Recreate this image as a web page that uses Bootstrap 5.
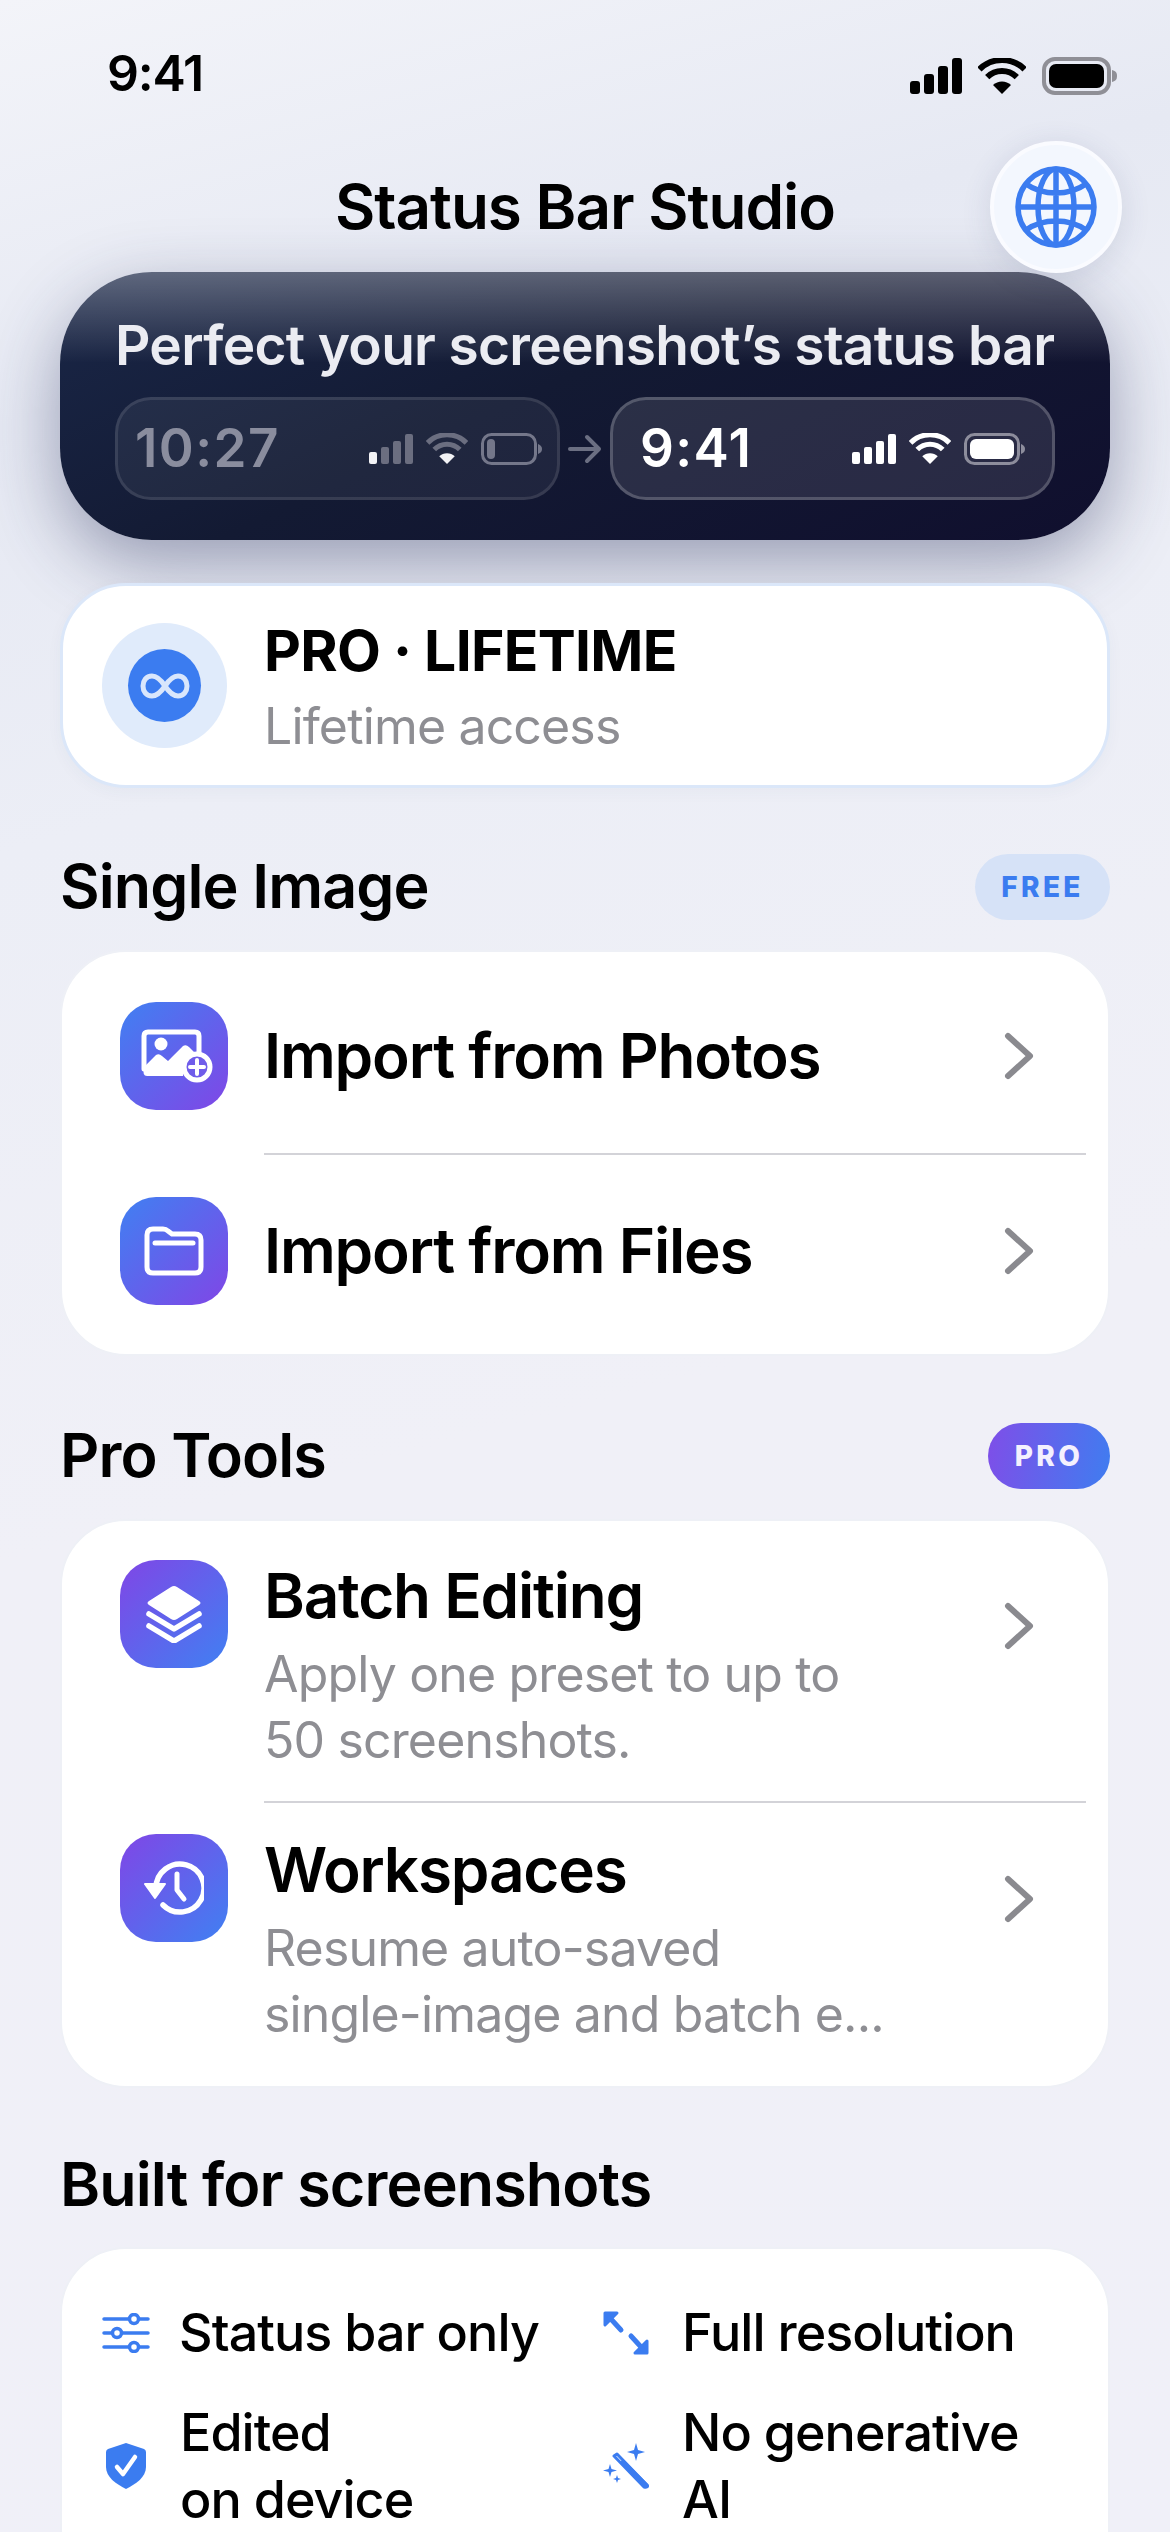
<!DOCTYPE html>
<html lang="en">
<head>
    <meta charset="UTF-8">
    <meta name="viewport" content="width=device-width, initial-scale=1.0">
    <title>Status Bar Studio</title>
    <link href="https://cdn.jsdelivr.net/npm/bootstrap@5.3.0/dist/css/bootstrap.min.css" rel="stylesheet">
    <style>
        html, body { height: 2532px; overflow: hidden; }
        body {
            font-family: Inter, "Liberation Sans", sans-serif;
            color: #000;
            background: linear-gradient(165deg, #f3f4f9 0, #e6e9f3 15%, #eceef6 30%, #f0f0f7 55%, #f0f0f8 100%);
        }
        .status-row { height: 141px; padding: 47px 52px 0 107px; }
        .status-time { font-size: 50px; font-weight: 600; line-height: 52px; letter-spacing: -1.200px; }
        .status-icons { gap: 16px; margin-top: 10px; }
        .app-head { height: 131px; padding-top: 33px; }
        .app-title { font-size: 62px; font-weight: 600; line-height: 66px; letter-spacing: -1px; margin: 0; }
        .globe-btn {
            position: absolute; right: 48px; top: 0; width: 132px; height: 132px;
            background: #f3f7fe; border: 4px solid #fafbff; border-radius: 50%;
            box-shadow: 0 6px 30px rgba(60, 70, 110, .14);
            z-index: 2;
        }
        .page-body { padding: 0 60px; }
        .hero-box {
            height: 268px; padding: 42px 55px 0;
            border-radius: 92px;
            background: linear-gradient(180deg, rgba(255, 255, 255, .3) 0, rgba(255, 255, 255, 0) 34%), linear-gradient(155deg, #1a2748 0, #131a33 45%, #100f2e 100%);
            box-shadow: 0 24px 70px rgba(40, 48, 90, .42);
        }
        .hero-text { font-size: 55px; font-weight: 600; line-height: 62px; letter-spacing: -.7px; color: #ebecf2; white-space: nowrap; margin: 0 0 21px; }
        .bar-pill {
            width: 445px; height: 103px; padding: 0 14px 0 17px; border-radius: 36px;
            border: 3px solid rgba(255, 255, 255, .1); background: rgba(255, 255, 255, .06);
            font-size: 53px; font-weight: 600; letter-spacing: 1.400px; color: #8a8d9e;
        }
        .bar-pill.after-pill { padding-left: 27px; padding-right: 26px; border-color: rgba(255, 255, 255, .2); background: rgba(255, 255, 255, .1); color: #fff; }
        .pill-icons { margin-left: auto; gap: 13px; }
        .plan-box {
            height: 205px; margin-top: 43px; padding: 0 39px; border-radius: 66px;
            background: #fff; border: 3px solid #dbe7f9; box-shadow: 0 4px 16px rgba(60, 70, 110, .04);
        }
        .plan-ring { width: 125px; height: 125px; border-radius: 50%; background: #e0ebfb; flex: none; margin-right: 37px; }
        .plan-dot { width: 73px; height: 73px; border-radius: 50%; background: #3b7cf0; }
        .plan-info { padding-top: 6px; }
        .plan-name { font-size: 57px; font-weight: 700; line-height: 66px; letter-spacing: -.7px; margin-bottom: 9px; }
        .sub-text { font-size: 50px; line-height: 66px; color: #8e8e93; letter-spacing: -.85px; }
        .sec-head { height: 67px; margin-bottom: 30px; }
        .sec-single { margin-top: 65px; }
        .sec-pro { margin-top: 66px; }
        .sec-built { margin-top: 63px; margin-bottom: 0; }
        .sec-title { font-size: 61px; font-weight: 600; line-height: 67px; letter-spacing: -.9px; margin: 0; }
        .tag-free, .tag-pro { font-size: 28px; font-weight: 800; letter-spacing: 3.400px; height: 66px; border-radius: 33px; }
        .tag-free { width: 135px; color: #3b7cf0; background: #d6e2f7; }
        .tag-pro { width: 122px; color: #f4f1fe; background: linear-gradient(100deg, #7f4ee8, #3f7df0); }
        .white-box { background: #fff; border: 2px solid #eef0f6; border-radius: 66px; overflow: hidden; }
        .white-box .list-group-item { background: transparent; border: 0; padding: 0; color: #000; }
        .row-in { position: relative; padding-left: 58px; padding-right: 74px; }
        .list-group-item + .list-group-item .row-in::before {
            content: ""; position: absolute; left: 202px; right: 22px; top: 0; height: 2px; background: #d3d3d8;
        }
        .tile { width: 108px; height: 108px; border-radius: 36px; flex: none; margin-right: 36px; }
        .tile-a { background: linear-gradient(135deg, #4080f2, #8046e6); }
        .tile-b { background: linear-gradient(135deg, #8046e6, #4080f2); }
        .photo-glyph { margin-left: 6px; }
        .row-title { font-size: 62px; font-weight: 600; line-height: 70px; letter-spacing: -1.200px; }
        .chev { margin-left: auto; flex: none; }
        .row-top { height: 201px; padding-top: 6px; }
        .row-bottom { height: 201px; padding-bottom: 6px; }
        .row-batch { height: 280px; padding-top: 39px; }
        .row-batch .row-text { margin-top: 1px; }
        .row-batch .chev { margin-top: 42px; }
        .row-work { height: 285px; padding-top: 33px; }
        .row-work .row-text { margin-top: 1px; }
        .row-work .chev { margin-top: 41px; }
        .row-text .row-title { margin-bottom: 10px; }
        .feat-box { margin-top: 29px; height: 400px; padding: 50px 10px 0 40px; }
        .feat-grid { display: grid; grid-template-columns: 498px 498px; row-gap: 33px; }
        .feat-icon { width: 50px; flex: none; margin-right: 28px; }
        .feat-slide { margin-right: 27px; }
        .feat-shield { padding-left: 4px; }
        .feat-wide { margin-left: 3px; margin-right: 29px; }
        .feat-text { font-size: 52px; font-weight: 500; line-height: 67px; letter-spacing: -.95px; }
    </style>
</head>
<body>
    <svg width="0" height="0" class="position-absolute">
        <symbol id="wifi-arcs" viewBox="0 0 48 36">
            <path d="M1.4 11.4A32 32 0 0 1 46.600 11.4M9.200 19.200A21 21 0 0 1 38.800 19.200" fill="none" stroke="currentColor" stroke-width="6"/>
        </symbol>
        <symbol id="wifi-dot" viewBox="0 0 48 36">
            <path d="M24 36L15 27A13 13 0 0 1 33 27Z" fill="currentColor"/>
        </symbol>
        <symbol id="chev-icon" viewBox="0 0 30 48">
            <path d="M4 4L26 24L4 44" fill="none" stroke="#8a8a8f" stroke-width="6" stroke-linecap="round" stroke-linejoin="round"/>
        </symbol>
    </svg>

    <div class="status-row d-flex justify-content-between align-items-start">
        <div class="status-time">9:41</div>
        <div class="status-icons d-flex align-items-center">
            <svg width="52" height="36" viewBox="0 0 52 36" fill="#000"><rect x="0" y="23" width="10" height="13" rx="3"/><rect x="14" y="16" width="10" height="20" rx="3"/><rect x="28" y="8" width="10" height="28" rx="3"/><rect x="42" y="0" width="10" height="36" rx="3"/></svg>
            <svg width="48" height="36" color="#000"><use href="#wifi-arcs"/><use href="#wifi-dot"/></svg>
            <svg width="76" height="38" viewBox="0 0 76 38"><rect x="2" y="2" width="65" height="34" rx="11" fill="none" stroke="#8f8f96" stroke-width="4"/><rect x="7" y="7" width="55" height="24" rx="7" fill="#000"/><path d="M70 13C74 14 75 16 75 19S74 24 70 25Z" fill="#8f8f96"/></svg>
        </div>
    </div>

    <div class="app-head position-relative text-center">
        <h1 class="app-title">Status Bar Studio</h1>
        <div class="globe-btn d-flex align-items-center justify-content-center">
            <svg width="82" height="82" viewBox="0 0 82 82" fill="none" stroke="#3b7cf0" stroke-width="5.500">
                <circle cx="41" cy="41" r="38"/><ellipse cx="41" cy="41" rx="18" ry="38"/><path d="M41 3V79M3 41H79M11 18C28 30 54 30 71 18M11 64C28 52 54 52 71 64"/>
            </svg>
        </div>
    </div>

    <div class="page-body">
        <div class="hero-box">
            <p class="hero-text">Perfect your screenshot’s status bar</p>
            <div class="d-flex align-items-center justify-content-between">
                <div class="bar-pill d-flex align-items-center">
                    <span>10:27</span>
                    <div class="pill-icons d-flex align-items-center">
                        <svg width="44" height="30" viewBox="0 0 44 30"><rect x="0" y="18" width="8" height="12" rx="2" fill="#f2f2f5"/><g fill="#6b6e80"><rect x="12" y="13" width="8" height="17" rx="2"/><rect x="24" y="7" width="8" height="23" rx="2"/><rect x="36" y="0" width="8" height="30" rx="2"/></g></svg>
                        <svg width="42" height="31" color="#6b6e80"><use href="#wifi-arcs"/><use href="#wifi-dot" color="#f2f2f5"/></svg>
                        <svg width="62" height="32" viewBox="0 0 62 32"><rect x="1.500" y="1.500" width="53" height="29" rx="9" fill="none" stroke="#74778a" stroke-width="3"/><rect x="6" y="6" width="8" height="20" rx="4" fill="#74778a"/><path d="M57 11C60 12 61 14 61 16S60 20 57 21Z" fill="#74778a"/></svg>
                    </div>
                </div>
                <svg width="34" height="30" viewBox="0 0 34 30" fill="none" stroke="#6b6f82" stroke-width="4" stroke-linecap="round" stroke-linejoin="round"><path d="M2 15H31M19 3L31 15L19 27"/></svg>
                <div class="bar-pill after-pill d-flex align-items-center">
                    <span>9:41</span>
                    <div class="pill-icons d-flex align-items-center">
                        <svg width="44" height="30" viewBox="0 0 44 30" fill="#fff"><rect x="0" y="18" width="8" height="12" rx="2"/><rect x="12" y="13" width="8" height="17" rx="2"/><rect x="24" y="7" width="8" height="23" rx="2"/><rect x="36" y="0" width="8" height="30" rx="2"/></svg>
                        <svg width="42" height="31" color="#fff"><use href="#wifi-arcs"/><use href="#wifi-dot"/></svg>
                        <svg width="62" height="32" viewBox="0 0 62 32"><rect x="1.500" y="1.500" width="53" height="29" rx="9" fill="none" stroke="#8d8d9c" stroke-width="3"/><rect x="6" y="6" width="44" height="20" rx="6" fill="#fff"/><path d="M57 11C60 12 61 14 61 16S60 20 57 21Z" fill="#8d8d9c"/></svg>
                    </div>
                </div>
            </div>
        </div>

        <div class="plan-box d-flex align-items-center">
            <div class="plan-ring d-flex align-items-center justify-content-center">
                <div class="plan-dot d-flex align-items-center justify-content-center">
                    <svg width="50" height="26" viewBox="0 0 50 26" fill="none" stroke="#d9e6fc" stroke-width="5"><path d="M25 13C21 7 17 3 12 3C6 3 3 8 3 13S6 23 12 23C17 23 21 19 25 13C29 7 33 3 38 3C44 3 47 8 47 13S44 23 38 23C33 23 29 19 25 13Z"/></svg>
                </div>
            </div>
            <div class="plan-info">
                <div class="plan-name">PRO · LIFETIME</div>
                <div class="sub-text">Lifetime access</div>
            </div>
        </div>

        <div class="sec-head sec-single d-flex align-items-center justify-content-between">
            <h2 class="sec-title">Single Image</h2>
            <span class="tag-free d-flex align-items-center justify-content-center">FREE</span>
        </div>
        <div class="white-box card">
            <div class="list-group list-group-flush">
                <div class="list-group-item">
                    <div class="row-in row-top d-flex align-items-center">
                        <div class="tile tile-a d-flex align-items-center justify-content-center">
                            <svg class="photo-glyph" width="72" height="54" viewBox="0 0 72 54">
                                <path d="M3 40V7Q3 3 7 3H54Q58 3 58 7V30" fill="none" stroke="#fff" stroke-width="5" stroke-linecap="round"/>
                                <path d="M3 38L15 26Q18 24 21 27L27 32L42 17Q45 15 48 18L56 26Q44 30 42 47H6Q1 47 3 38Z" fill="#fff"/>
                                <circle cx="20" cy="15" r="6.500" fill="#fff"/>
                                <circle cx="56" cy="38" r="13" fill="#6f5cea" stroke="#fff" stroke-width="5"/>
                                <path d="M56 31V45M49 38H63" stroke="#fff" stroke-width="4" stroke-linecap="round"/>
                            </svg>
                        </div>
                        <div class="row-title">Import from Photos</div>
                        <svg class="chev" width="30" height="48"><use href="#chev-icon"/></svg>
                    </div>
                </div>
                <div class="list-group-item">
                    <div class="row-in row-bottom d-flex align-items-center">
                        <div class="tile tile-a d-flex align-items-center justify-content-center">
                            <svg width="60" height="50" viewBox="0 0 60 50" fill="none" stroke="#fff" stroke-width="5" stroke-linejoin="round"><path d="M3 9Q3 3 9 3H19Q22 3 24 5L28 8H51Q57 8 57 14V41Q57 47 51 47H9Q3 47 3 41Z"/><path d="M11 17H49" stroke-linecap="round"/></svg>
                        </div>
                        <div class="row-title">Import from Files</div>
                        <svg class="chev" width="30" height="48"><use href="#chev-icon"/></svg>
                    </div>
                </div>
            </div>
        </div>

        <div class="sec-head sec-pro d-flex align-items-center justify-content-between">
            <h2 class="sec-title">Pro Tools</h2>
            <span class="tag-pro d-flex align-items-center justify-content-center">PRO</span>
        </div>
        <div class="white-box card">
            <div class="list-group list-group-flush">
                <div class="list-group-item">
                    <div class="row-in row-batch d-flex align-items-start">
                        <div class="tile tile-b d-flex align-items-center justify-content-center">
                            <svg width="56" height="58" viewBox="0 0 56 58"><path d="M25 2Q28 0 31 2L53 16Q56 18 53 20L31 34Q28 36 25 34L3 20Q0 18 3 16Z" fill="#fff"/><path d="M3 29L28 44L53 29M3 41L28 56L53 41" fill="none" stroke="#fff" stroke-width="5.500" stroke-linecap="round" stroke-linejoin="round"/></svg>
                        </div>
                        <div class="row-text">
                            <div class="row-title">Batch Editing</div>
                            <div class="sub-text">Apply one preset to up to<br>50 screenshots.</div>
                        </div>
                        <svg class="chev" width="30" height="48"><use href="#chev-icon"/></svg>
                    </div>
                </div>
                <div class="list-group-item">
                    <div class="row-in row-work d-flex align-items-start">
                        <div class="tile tile-b d-flex align-items-center justify-content-center">
                            <svg width="60" height="54" viewBox="0 0 60 54"><path d="M12 27A24 24 0 1 1 19 44" fill="none" stroke="#fff" stroke-width="5.500" stroke-linecap="round"/><path d="M1 23L21 23L11 37Z" fill="#fff" stroke="#fff" stroke-width="2" stroke-linejoin="round"/><path d="M33 13V29L40 38" fill="none" stroke="#fff" stroke-width="5" stroke-linecap="round" stroke-linejoin="round"/></svg>
                        </div>
                        <div class="row-text">
                            <div class="row-title">Workspaces</div>
                            <div class="sub-text">Resume auto-saved<br>single-image and batch e...</div>
                        </div>
                        <svg class="chev" width="30" height="48"><use href="#chev-icon"/></svg>
                    </div>
                </div>
            </div>
        </div>

        <div class="sec-head sec-built d-flex align-items-center">
            <h2 class="sec-title">Built for screenshots</h2>
        </div>
        <div class="white-box card feat-box">
            <div class="feat-grid">
                <div class="d-flex align-items-center">
                    <div class="feat-icon feat-slide">
                        <svg width="48" height="40" viewBox="0 0 48 40" fill="#fff" stroke="#3b7cf0" stroke-width="3.500" stroke-linecap="round"><path d="M2 6H46M2 20H46M2 34H46"/><circle cx="32" cy="6" r="4.500"/><circle cx="15" cy="20" r="4.500"/><circle cx="32" cy="34" r="4.500"/></svg>
                    </div>
                    <div class="feat-text">Status bar only</div>
                </div>
                <div class="d-flex align-items-center">
                    <div class="feat-icon feat-wide">
                        <svg width="46" height="44" viewBox="0 0 46 44" fill="#3b7cf0" stroke="#3b7cf0" stroke-width="3" stroke-linejoin="round" stroke-linecap="round"><path d="M2 2H14L2 14ZM44 42H32L44 30Z"/><path d="M7 7L18 19M39 37L28 25" stroke-width="5"/></svg>
                    </div>
                    <div class="feat-text">Full resolution</div>
                </div>
                <div class="d-flex align-items-center">
                    <div class="feat-icon feat-shield">
                        <svg width="40" height="46" viewBox="0 0 40 46"><path d="M20 0L38 6Q40 7 40 9V24C40 34 30 41 20 46C10 41 0 34 0 24V9Q0 7 2 6Z" fill="#3b7cf0"/><path d="M11 24L17 31L29 14" fill="none" stroke="#fff" stroke-width="4.500" stroke-linecap="round" stroke-linejoin="round"/></svg>
                    </div>
                    <div class="feat-text">Edited<br>on device</div>
                </div>
                <div class="d-flex align-items-center">
                    <div class="feat-icon feat-wide">
                        <svg width="46" height="46" viewBox="0 0 46 46"><path d="M11 13L14 11L44 42Q45 45 41 44Z" fill="#fff" stroke="#3b7cf0" stroke-width="3" stroke-linejoin="round"/><path d="M20 19L44 43" stroke="#3b7cf0" stroke-width="4" stroke-linecap="round"/><path d="M33 0L35 7L42 9L35 11L33 18L31 11L24 9L31 7ZM7 21L8.500 26L14 27.500L8.500 29L7 34L5.500 29L0 27.500L5.500 26ZM14 32L15 35L18 36L15 37L14 40L13 37L10 36L13 35Z" fill="#3b7cf0"/></svg>
                    </div>
                    <div class="feat-text">No generative<br>AI</div>
                </div>
            </div>
        </div>
    </div>
    <script src="https://cdn.jsdelivr.net/npm/bootstrap@5.3.0/dist/js/bootstrap.bundle.min.js"></script>
</body>
</html>
